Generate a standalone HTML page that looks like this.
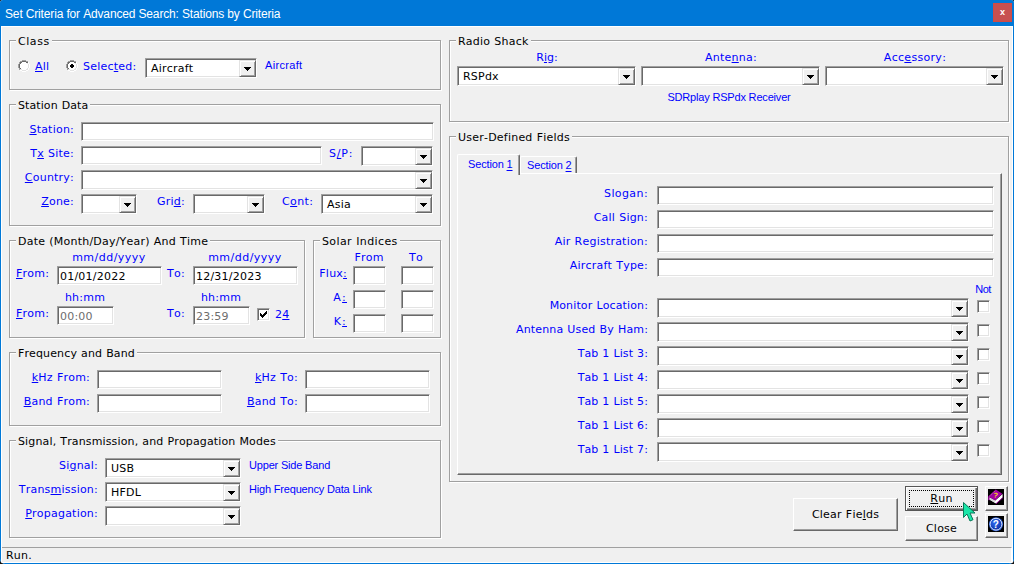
<!DOCTYPE html>
<html><head><meta charset="utf-8"><title>Set Criteria for Advanced Search</title>
<style>
html,body{margin:0;padding:0;background:#151515}
body{width:1014px;height:564px;overflow:hidden;background:#151515;position:relative;font-family:"DejaVu Sans","Liberation Sans",sans-serif;font-size:11px;color:#000;letter-spacing:0.22px;word-spacing:0.4px;font-kerning:none;font-variant-ligatures:none}
#win{position:absolute;left:0;top:0;width:1014px;height:564px;background:#f0f0f0;overflow:hidden;border-radius:3px 3px 5px 5px}
#fr{position:absolute;left:1px;top:26px;width:1010px;height:535px;border:1px solid #fff}
#title{position:absolute;left:0;top:0;width:1014px;height:26px;background:#0078d7}
#title span{position:absolute;left:5px;top:6px;color:#fff;font-family:"Liberation Sans","DejaVu Sans",sans-serif;font-size:12px;line-height:16px;white-space:nowrap;letter-spacing:-0.15px;word-spacing:0}
#x{position:absolute;left:993px;top:3px;width:19px;height:19px;box-sizing:border-box;border:1px solid #d04a46;background:#c75050;color:#fff;font-family:"Liberation Sans","DejaVu Sans",sans-serif;font-size:9px;font-weight:bold;text-align:center;line-height:17px;letter-spacing:0}
#bl{position:absolute;left:0;top:26px;width:1px;height:538px;background:#0078d7}
#br{position:absolute;left:1013px;top:26px;width:1px;height:538px;background:#0078d7}
#bb{position:absolute;left:0;top:563px;width:1014px;height:1px;background:#0078d7}
#status{position:absolute;left:2px;top:547px;width:1009px;height:15px;border-top:1px solid #a0a0a0;border-right:1px solid #fff}
#status span{position:absolute;left:4px;top:1px;line-height:14px}
.grp{position:absolute;box-sizing:border-box;border:1px solid #a0a0a0;box-shadow:1px 1px 0 #fff, inset 1px 1px 0 #fff}
.gl{position:absolute;background:#f0f0f0;padding:0 2px;line-height:14px;height:11px;white-space:nowrap}
.lb{position:absolute;color:#0000ff;line-height:14px;white-space:nowrap}
.lb.r{text-align:right}
.lb.c{text-align:center}
.lb.ar{font-family:"Liberation Sans","DejaVu Sans",sans-serif;font-size:11px;color:#0000ff;letter-spacing:-0.18px;word-spacing:0}
.tb{position:absolute;box-sizing:border-box;background:#fff;border:1px solid;border-color:#a0a0a0 #fff #fff #a0a0a0;box-shadow:inset 1px 1px 0 #696969, inset -1px -1px 0 #e3e3e3}
.tb span{position:absolute;left:2px;top:3px;line-height:14px;white-space:nowrap}
.tb.cb span{left:5px;top:3px}
.tb.dis span{color:#6d6d6d}
.dd{position:absolute;right:0;top:1px;bottom:0;width:17px;background:#f0f0f0;box-sizing:border-box;border:1px solid;border-color:#e3e3e3 #696969 #696969 #e3e3e3;box-shadow:inset 1px 1px 0 #fff, inset -1px -1px 0 #a0a0a0}
.dd b{position:absolute;left:7px;top:9px;width:1px;height:1px;background:#000;box-shadow:-1px -1px 0 #000,0px -1px 0 #000,1px -1px 0 #000,-2px -2px 0 #000,-1px -2px 0 #000,0px -2px 0 #000,1px -2px 0 #000,2px -2px 0 #000,-3px -3px 0 #000,-2px -3px 0 #000,-1px -3px 0 #000,0px -3px 0 #000,1px -3px 0 #000,2px -3px 0 #000,3px -3px 0 #000}
.rd{position:absolute;width:12px;height:12px;box-sizing:border-box;border-radius:50%;background:#fff;border:1px solid;border-color:#808080 #fff #fff #808080;box-shadow:inset 1px 1px 0 #404040}
.rd i{position:absolute;left:3px;top:3px;width:4px;height:4px;border-radius:50%;background:#000}
.ck{position:absolute;width:13px;height:13px;box-sizing:border-box;background:#fff;border:1px solid;border-color:#a0a0a0 #fff #fff #a0a0a0;box-shadow:inset 1px 1px 0 #696969, inset -1px -1px 0 #e3e3e3}
.px{position:absolute}
.bt{position:absolute;box-sizing:border-box;background:#f0f0f0;border:1px solid;border-color:#fff #696969 #696969 #fff;box-shadow:inset -1px -1px 0 #a0a0a0, inset 1px 1px 0 #f0f0f0}
.bt span{position:absolute;left:0;right:0;top:50%;margin-top:-7px;line-height:14px;text-align:center;white-space:nowrap;font-size:11px}
.bt.df{border-color:#555;box-shadow:inset 1px 1px 0 #fff, inset -1px -1px 0 #696969, inset -2px -2px 0 #a0a0a0}
.bt.df em{position:absolute;left:3px;top:3px;right:3px;bottom:3px;border:1px dotted #000}
.bt.ib svg{position:absolute;left:2px;top:2px}
.tabbody{position:absolute;box-sizing:border-box;border:1px solid;border-color:#fff #696969 #696969 #fff;box-shadow:inset -1px -1px 0 #a0a0a0}
.tab{position:absolute;box-sizing:border-box;background:#f0f0f0;border:1px solid;border-color:#fff #696969 transparent #fff;border-bottom:none;box-shadow:inset -1px 0 0 #a0a0a0;border-radius:2px 2px 0 0}
.tab span{position:absolute;left:0;top:2px;font-family:"Liberation Sans","DejaVu Sans",sans-serif;font-size:11px;color:#0000ff;line-height:14px;white-space:nowrap;letter-spacing:-0.15px;word-spacing:0}
.tab u{text-underline-offset:2px;text-decoration-thickness:1px}
.cur{position:absolute}
u{text-decoration:underline}
</style></head>
<body><div id="win">
<div id="title"><span>Set Criteria for Advanced Search: Stations by Criteria</span><div id="x">x</div></div>
<div id="fr"></div><div id="bl"></div><div id="br"></div><div id="bb"></div>
<div class="grp" style="left:9px;top:40px;width:432px;height:50px"></div>
<div class="gl" style="left:16px;top:35px;letter-spacing:0.55px">Class</div>
<svg class="px" style="left:18px;top:60px" width="12" height="12" viewBox="0 0 12 12" shape-rendering="crispEdges"><rect x="4" y="0" width="4" height="1" fill="#a0a0a0"/><rect x="2" y="1" width="2" height="1" fill="#a0a0a0"/><rect x="4" y="1" width="4" height="1" fill="#696969"/><rect x="8" y="1" width="2" height="1" fill="#a0a0a0"/><rect x="1" y="2" width="1" height="1" fill="#a0a0a0"/><rect x="2" y="2" width="2" height="1" fill="#696969"/><rect x="4" y="2" width="4" height="1" fill="#ffffff"/><rect x="8" y="2" width="2" height="1" fill="#696969"/><rect x="10" y="2" width="1" height="1" fill="#ffffff"/><rect x="1" y="3" width="1" height="1" fill="#a0a0a0"/><rect x="2" y="3" width="1" height="1" fill="#696969"/><rect x="3" y="3" width="6" height="1" fill="#ffffff"/><rect x="9" y="3" width="1" height="1" fill="#e3e3e3"/><rect x="10" y="3" width="1" height="1" fill="#ffffff"/><rect x="0" y="4" width="1" height="1" fill="#a0a0a0"/><rect x="1" y="4" width="1" height="1" fill="#696969"/><rect x="2" y="4" width="8" height="1" fill="#ffffff"/><rect x="10" y="4" width="1" height="1" fill="#e3e3e3"/><rect x="11" y="4" width="1" height="1" fill="#ffffff"/><rect x="0" y="5" width="1" height="1" fill="#a0a0a0"/><rect x="1" y="5" width="1" height="1" fill="#696969"/><rect x="2" y="5" width="8" height="1" fill="#ffffff"/><rect x="10" y="5" width="1" height="1" fill="#e3e3e3"/><rect x="11" y="5" width="1" height="1" fill="#ffffff"/><rect x="0" y="6" width="1" height="1" fill="#a0a0a0"/><rect x="1" y="6" width="1" height="1" fill="#696969"/><rect x="2" y="6" width="8" height="1" fill="#ffffff"/><rect x="10" y="6" width="1" height="1" fill="#e3e3e3"/><rect x="11" y="6" width="1" height="1" fill="#ffffff"/><rect x="0" y="7" width="1" height="1" fill="#a0a0a0"/><rect x="1" y="7" width="1" height="1" fill="#696969"/><rect x="2" y="7" width="8" height="1" fill="#ffffff"/><rect x="10" y="7" width="1" height="1" fill="#e3e3e3"/><rect x="11" y="7" width="1" height="1" fill="#ffffff"/><rect x="1" y="8" width="1" height="1" fill="#a0a0a0"/><rect x="2" y="8" width="1" height="1" fill="#696969"/><rect x="3" y="8" width="6" height="1" fill="#ffffff"/><rect x="9" y="8" width="1" height="1" fill="#e3e3e3"/><rect x="10" y="8" width="1" height="1" fill="#ffffff"/><rect x="1" y="9" width="1" height="1" fill="#a0a0a0"/><rect x="2" y="9" width="2" height="1" fill="#e3e3e3"/><rect x="4" y="9" width="4" height="1" fill="#ffffff"/><rect x="8" y="9" width="2" height="1" fill="#e3e3e3"/><rect x="10" y="9" width="1" height="1" fill="#ffffff"/><rect x="2" y="10" width="2" height="1" fill="#ffffff"/><rect x="4" y="10" width="4" height="1" fill="#e3e3e3"/><rect x="8" y="10" width="2" height="1" fill="#ffffff"/><rect x="4" y="11" width="4" height="1" fill="#ffffff"/></svg>
<div class="lb " style="left:35px;top:60px"><u>A</u>ll</div>
<svg class="px" style="left:66px;top:60px" width="12" height="12" viewBox="0 0 12 12" shape-rendering="crispEdges"><rect x="4" y="0" width="4" height="1" fill="#a0a0a0"/><rect x="2" y="1" width="2" height="1" fill="#a0a0a0"/><rect x="4" y="1" width="4" height="1" fill="#696969"/><rect x="8" y="1" width="2" height="1" fill="#a0a0a0"/><rect x="1" y="2" width="1" height="1" fill="#a0a0a0"/><rect x="2" y="2" width="2" height="1" fill="#696969"/><rect x="4" y="2" width="4" height="1" fill="#ffffff"/><rect x="8" y="2" width="2" height="1" fill="#696969"/><rect x="10" y="2" width="1" height="1" fill="#ffffff"/><rect x="1" y="3" width="1" height="1" fill="#a0a0a0"/><rect x="2" y="3" width="1" height="1" fill="#696969"/><rect x="3" y="3" width="6" height="1" fill="#ffffff"/><rect x="9" y="3" width="1" height="1" fill="#e3e3e3"/><rect x="10" y="3" width="1" height="1" fill="#ffffff"/><rect x="0" y="4" width="1" height="1" fill="#a0a0a0"/><rect x="1" y="4" width="1" height="1" fill="#696969"/><rect x="2" y="4" width="3" height="1" fill="#ffffff"/><rect x="5" y="4" width="2" height="1" fill="#000000"/><rect x="7" y="4" width="3" height="1" fill="#ffffff"/><rect x="10" y="4" width="1" height="1" fill="#e3e3e3"/><rect x="11" y="4" width="1" height="1" fill="#ffffff"/><rect x="0" y="5" width="1" height="1" fill="#a0a0a0"/><rect x="1" y="5" width="1" height="1" fill="#696969"/><rect x="2" y="5" width="2" height="1" fill="#ffffff"/><rect x="4" y="5" width="4" height="1" fill="#000000"/><rect x="8" y="5" width="2" height="1" fill="#ffffff"/><rect x="10" y="5" width="1" height="1" fill="#e3e3e3"/><rect x="11" y="5" width="1" height="1" fill="#ffffff"/><rect x="0" y="6" width="1" height="1" fill="#a0a0a0"/><rect x="1" y="6" width="1" height="1" fill="#696969"/><rect x="2" y="6" width="2" height="1" fill="#ffffff"/><rect x="4" y="6" width="4" height="1" fill="#000000"/><rect x="8" y="6" width="2" height="1" fill="#ffffff"/><rect x="10" y="6" width="1" height="1" fill="#e3e3e3"/><rect x="11" y="6" width="1" height="1" fill="#ffffff"/><rect x="0" y="7" width="1" height="1" fill="#a0a0a0"/><rect x="1" y="7" width="1" height="1" fill="#696969"/><rect x="2" y="7" width="3" height="1" fill="#ffffff"/><rect x="5" y="7" width="2" height="1" fill="#000000"/><rect x="7" y="7" width="3" height="1" fill="#ffffff"/><rect x="10" y="7" width="1" height="1" fill="#e3e3e3"/><rect x="11" y="7" width="1" height="1" fill="#ffffff"/><rect x="1" y="8" width="1" height="1" fill="#a0a0a0"/><rect x="2" y="8" width="1" height="1" fill="#696969"/><rect x="3" y="8" width="6" height="1" fill="#ffffff"/><rect x="9" y="8" width="1" height="1" fill="#e3e3e3"/><rect x="10" y="8" width="1" height="1" fill="#ffffff"/><rect x="1" y="9" width="1" height="1" fill="#a0a0a0"/><rect x="2" y="9" width="2" height="1" fill="#e3e3e3"/><rect x="4" y="9" width="4" height="1" fill="#ffffff"/><rect x="8" y="9" width="2" height="1" fill="#e3e3e3"/><rect x="10" y="9" width="1" height="1" fill="#ffffff"/><rect x="2" y="10" width="2" height="1" fill="#ffffff"/><rect x="4" y="10" width="4" height="1" fill="#e3e3e3"/><rect x="8" y="10" width="2" height="1" fill="#ffffff"/><rect x="4" y="11" width="4" height="1" fill="#ffffff"/></svg>
<div class="lb " style="left:83px;top:60px">Selec<u>t</u>ed:</div>
<div class="tb cb" style="left:145px;top:58px;width:112px;height:20px"><span>Aircraft</span><i class="dd"><b></b></i></div>
<div class="lb ar" style="left:265px;top:58px;letter-spacing:0.32px">Aircraft</div>
<div class="grp" style="left:9px;top:104px;width:432px;height:122px"></div>
<div class="gl" style="left:16px;top:99px;letter-spacing:0.09px">Station Data</div>
<div class="lb r " style="right:940px;top:123px"><u>S</u>tation:</div>
<div class="tb " style="left:81px;top:122px;width:353px;height:19px"><span></span></div>
<div class="lb r " style="right:940px;top:147px">T<u>x</u> Site:</div>
<div class="tb " style="left:81px;top:146px;width:241px;height:19px"><span></span></div>
<div class="lb " style="left:329px;top:147px;letter-spacing:0.8px">S<u>/</u>P:</div>
<div class="tb cb" style="left:361px;top:146px;width:72px;height:20px"><span></span><i class="dd"><b></b></i></div>
<div class="lb r " style="right:940px;top:171px"><u>C</u>ountry:</div>
<div class="tb cb" style="left:81px;top:170px;width:352px;height:20px"><span></span><i class="dd"><b></b></i></div>
<div class="lb r " style="right:940px;top:195px"><u>Z</u>one:</div>
<div class="tb cb" style="left:81px;top:194px;width:56px;height:20px"><span></span><i class="dd"><b></b></i></div>
<div class="lb " style="left:157px;top:195px">Gri<u>d</u>:</div>
<div class="tb cb" style="left:193px;top:194px;width:72px;height:20px"><span></span><i class="dd"><b></b></i></div>
<div class="lb " style="left:282px;top:195px;letter-spacing:0.4px">C<u>o</u>nt:</div>
<div class="tb cb" style="left:321px;top:194px;width:112px;height:20px"><span>Asia</span><i class="dd"><b></b></i></div>
<div class="grp" style="left:9px;top:240px;width:296px;height:98px"></div>
<div class="gl" style="left:16px;top:235px">Date (Month/Day/Year) And Time</div>
<div class="lb c " style="left:9px;width:200px;top:251px;letter-spacing:0.48px">mm/dd/yyyy</div>
<div class="lb c " style="left:145px;width:200px;top:251px;letter-spacing:0.48px">mm/dd/yyyy</div>
<div class="lb " style="left:16px;top:267px"><u>F</u>rom:</div>
<div class="tb " style="left:57px;top:266px;width:105px;height:19px"><span>01/01/2022</span></div>
<div class="lb " style="left:167px;top:267px">To:</div>
<div class="tb " style="left:193px;top:266px;width:105px;height:19px"><span>12/31/2023</span></div>
<div class="lb c " style="left:-15px;width:200px;top:291px">hh:mm</div>
<div class="lb c " style="left:121px;width:200px;top:291px">hh:mm</div>
<div class="lb " style="left:16px;top:307px"><u>F</u>rom:</div>
<div class="tb dis" style="left:57px;top:306px;width:57px;height:19px"><span>00:00</span></div>
<div class="lb " style="left:167px;top:307px">To:</div>
<div class="tb dis" style="left:193px;top:306px;width:57px;height:19px"><span>23:59</span></div>
<div class="ck" style="left:257px;top:308px"></div>
<svg class="px" style="left:260px;top:311px" width="7" height="7" viewBox="0 0 7 7" shape-rendering="crispEdges"><rect x="6" y="0" width="1" height="1" fill="#000000"/><rect x="5" y="1" width="2" height="1" fill="#000000"/><rect x="0" y="2" width="1" height="1" fill="#000000"/><rect x="4" y="2" width="3" height="1" fill="#000000"/><rect x="0" y="3" width="2" height="1" fill="#000000"/><rect x="3" y="3" width="3" height="1" fill="#000000"/><rect x="0" y="4" width="5" height="1" fill="#000000"/><rect x="1" y="5" width="3" height="1" fill="#000000"/><rect x="2" y="6" width="1" height="1" fill="#000000"/></svg>
<div class="lb " style="left:275px;top:308px">2<u>4</u></div>
<div class="grp" style="left:313px;top:240px;width:128px;height:98px"></div>
<div class="gl" style="left:320px;top:235px;letter-spacing:0.38px">Solar Indices</div>
<div class="lb c " style="left:269px;width:200px;top:251px">From</div>
<div class="lb c " style="left:316px;width:200px;top:251px">To</div>
<div class="lb r " style="right:667px;top:267px">Flux<u>:</u></div>
<div class="tb " style="left:353px;top:266px;width:33px;height:19px"><span></span></div>
<div class="tb " style="left:401px;top:266px;width:33px;height:19px"><span></span></div>
<div class="lb r " style="right:667px;top:291px;letter-spacing:1.2px">A<u>:</u></div>
<div class="tb " style="left:353px;top:290px;width:33px;height:19px"><span></span></div>
<div class="tb " style="left:401px;top:290px;width:33px;height:19px"><span></span></div>
<div class="lb r " style="right:667px;top:315px;letter-spacing:1.2px">K<u>:</u></div>
<div class="tb " style="left:353px;top:314px;width:33px;height:19px"><span></span></div>
<div class="tb " style="left:401px;top:314px;width:33px;height:19px"><span></span></div>
<div class="grp" style="left:9px;top:352px;width:432px;height:74px"></div>
<div class="gl" style="left:16px;top:347px;letter-spacing:0.13px">Frequency and Band</div>
<div class="lb r " style="right:924px;top:371px"><u>k</u>Hz From:</div>
<div class="tb " style="left:97px;top:370px;width:125px;height:19px"><span></span></div>
<div class="lb r " style="right:716px;top:371px"><u>k</u>Hz To:</div>
<div class="tb " style="left:305px;top:370px;width:125px;height:19px"><span></span></div>
<div class="lb r " style="right:924px;top:395px"><u>B</u>and From:</div>
<div class="tb " style="left:97px;top:394px;width:125px;height:19px"><span></span></div>
<div class="lb r " style="right:716px;top:395px"><u>B</u>and To:</div>
<div class="tb " style="left:305px;top:394px;width:125px;height:19px"><span></span></div>
<div class="grp" style="left:9px;top:440px;width:432px;height:98px"></div>
<div class="gl" style="left:16px;top:435px;letter-spacing:0.14px">Signal, Transmission, and Propagation Modes</div>
<div class="lb r " style="right:916px;top:459px">Si<u>g</u>nal:</div>
<div class="tb cb" style="left:105px;top:458px;width:136px;height:20px"><span>USB</span><i class="dd"><b></b></i></div>
<div class="lb ar" style="left:249px;top:458px">Upper Side Band</div>
<div class="lb r " style="right:916px;top:483px">Trans<u>m</u>ission:</div>
<div class="tb cb" style="left:105px;top:482px;width:136px;height:20px"><span>HFDL</span><i class="dd"><b></b></i></div>
<div class="lb ar" style="left:249px;top:482px">High Frequency Data Link</div>
<div class="lb r " style="right:916px;top:507px"><u>P</u>ropagation:</div>
<div class="tb cb" style="left:105px;top:506px;width:136px;height:20px"><span></span><i class="dd"><b></b></i></div>
<div class="grp" style="left:449px;top:40px;width:560px;height:82px"></div>
<div class="gl" style="left:456px;top:35px">Radio Shack</div>
<div class="lb c " style="left:447px;width:200px;top:51px;letter-spacing:0px">R<u>i</u>g:</div>
<div class="lb c " style="left:631px;width:200px;top:51px">Ante<u>n</u>na:</div>
<div class="lb c " style="left:815px;width:200px;top:51px;letter-spacing:0.3px">Acc<u>e</u>ssory:</div>
<div class="tb cb" style="left:457px;top:66px;width:179px;height:20px"><span>RSPdx</span><i class="dd"><b></b></i></div>
<div class="tb cb" style="left:641px;top:66px;width:179px;height:20px"><span></span><i class="dd"><b></b></i></div>
<div class="tb cb" style="left:825px;top:66px;width:179px;height:20px"><span></span><i class="dd"><b></b></i></div>
<div class="lb c ar" style="left:629px;width:200px;top:90px">SDRplay RSPdx Receiver</div>
<div class="grp" style="left:449px;top:136px;width:560px;height:346px"></div>
<div class="gl" style="left:456px;top:131px">User-Defined Fields</div>
<div class="tabbody" style="left:457px;top:173px;width:545px;height:302px"></div>
<div class="tab sel" style="left:457px;top:154px;width:63px;height:21px"><span style="left:10px;top:2px">Section <u>1</u></span></div>
<div class="tab" style="left:520px;top:156px;width:57px;height:17px"><span style="left:6px;top:1px">Section <u>2</u></span></div>
<div class="lb r " style="right:366px;top:187px;letter-spacing:0.4px">Slogan:</div>
<div class="tb " style="left:657px;top:186px;width:337px;height:19px"><span></span></div>
<div class="lb r " style="right:366px;top:211px">Call Sign:</div>
<div class="tb " style="left:657px;top:210px;width:337px;height:19px"><span></span></div>
<div class="lb r " style="right:366px;top:235px">Air Registration:</div>
<div class="tb " style="left:657px;top:234px;width:337px;height:19px"><span></span></div>
<div class="lb r " style="right:366px;top:259px">Aircraft Type:</div>
<div class="tb " style="left:657px;top:258px;width:337px;height:19px"><span></span></div>
<div class="lb c ar" style="left:883px;width:200px;top:282px;letter-spacing:-0.5px">Not</div>
<div class="lb r " style="right:366px;top:299px;letter-spacing:0.13px">Monitor Location:</div>
<div class="tb cb" style="left:657px;top:298px;width:312px;height:20px"><span></span><i class="dd"><b></b></i></div>
<div class="ck" style="left:977px;top:300px"></div>
<div class="lb r " style="right:366px;top:323px;letter-spacing:0.15px">Antenna Used By Ham:</div>
<div class="tb cb" style="left:657px;top:322px;width:312px;height:20px"><span></span><i class="dd"><b></b></i></div>
<div class="ck" style="left:977px;top:324px"></div>
<div class="lb r " style="right:366px;top:347px;letter-spacing:0.1px">Tab 1 List 3:</div>
<div class="tb cb" style="left:657px;top:346px;width:312px;height:20px"><span></span><i class="dd"><b></b></i></div>
<div class="ck" style="left:977px;top:348px"></div>
<div class="lb r " style="right:366px;top:371px;letter-spacing:0.1px">Tab 1 List 4:</div>
<div class="tb cb" style="left:657px;top:370px;width:312px;height:20px"><span></span><i class="dd"><b></b></i></div>
<div class="ck" style="left:977px;top:372px"></div>
<div class="lb r " style="right:366px;top:395px;letter-spacing:0.1px">Tab 1 List 5:</div>
<div class="tb cb" style="left:657px;top:394px;width:312px;height:20px"><span></span><i class="dd"><b></b></i></div>
<div class="ck" style="left:977px;top:396px"></div>
<div class="lb r " style="right:366px;top:419px;letter-spacing:0.1px">Tab 1 List 6:</div>
<div class="tb cb" style="left:657px;top:418px;width:312px;height:20px"><span></span><i class="dd"><b></b></i></div>
<div class="ck" style="left:977px;top:420px"></div>
<div class="lb r " style="right:366px;top:443px;letter-spacing:0.1px">Tab 1 List 7:</div>
<div class="tb cb" style="left:657px;top:442px;width:312px;height:20px"><span></span><i class="dd"><b></b></i></div>
<div class="ck" style="left:977px;top:444px"></div>
<div class="bt" style="left:793px;top:498px;width:105px;height:33px"><span>Clear Fie<u>l</u>ds</span></div>
<div class="bt df" style="left:905px;top:486px;width:73px;height:25px"><span><u>R</u>un</span><em></em></div>
<div class="bt" style="left:905px;top:516px;width:73px;height:25px"><span>Close</span></div>
<div class="bt ib" style="left:985px;top:486px;width:23px;height:25px"><svg width="16" height="16" viewBox="0 0 16 16"><rect width="16" height="16" fill="#000"/><path d="M1.3 8.3L7.2 11.6L14.6 4.9V8.5L8 14.5L1.3 10.6z" fill="#fff"/><path d="M1.3 8.3L7.2 11.6V14L1.3 10.6z" fill="#d8d8d8"/><path d="M8 14.8L14.9 8.6" stroke="#a000a0" stroke-width="0.9" fill="none"/><path d="M7.7 0.4L14.4 4.7L7.2 11.4L0.2 7.4z" fill="#a000a0"/><path d="M0.2 7.4V11L1.4 11.6V8.1z" fill="#a000a0"/><path d="M1.6 7L7.6 1.6" stroke="#c8a0c8" stroke-width="0.7" stroke-dasharray="1 1" fill="none"/><text x="5.6" y="8.6" font-size="7" font-weight="bold" fill="#ffee00" font-family='"Liberation Sans",sans-serif' transform="rotate(8 8 6)">?</text></svg></div>
<div class="bt ib" style="left:985px;top:513px;width:23px;height:25px"><svg width="16" height="16" viewBox="0 0 16 16"><defs><radialGradient id="hg" cx="0.4" cy="0.35" r="0.75"><stop offset="0" stop-color="#2f6cf5"/><stop offset="1" stop-color="#0a2a9a"/></radialGradient></defs><rect width="16" height="16" fill="#000"/><circle cx="8" cy="8.2" r="7" fill="#2a5bd0"/><circle cx="8" cy="8.2" r="5.9" fill="url(#hg)" stroke="#e6eeff" stroke-width="0.9"/><text x="8" y="11.8" text-anchor="middle" font-size="10" font-weight="bold" fill="#fff" font-family='"Liberation Sans",sans-serif'>?</text></svg></div>
<svg class="cur" style="left:962px;top:501px" width="16" height="22" viewBox="0 0 16 22"><path d="M1.5 1.5v15l3.5-3.5 3 7 3-1.3-3-6.7h5z" fill="#19e6a8" stroke="#0a7a5a" stroke-width="1"/></svg>
<div id="status"><span>Run.</span></div>
</div></body></html>
